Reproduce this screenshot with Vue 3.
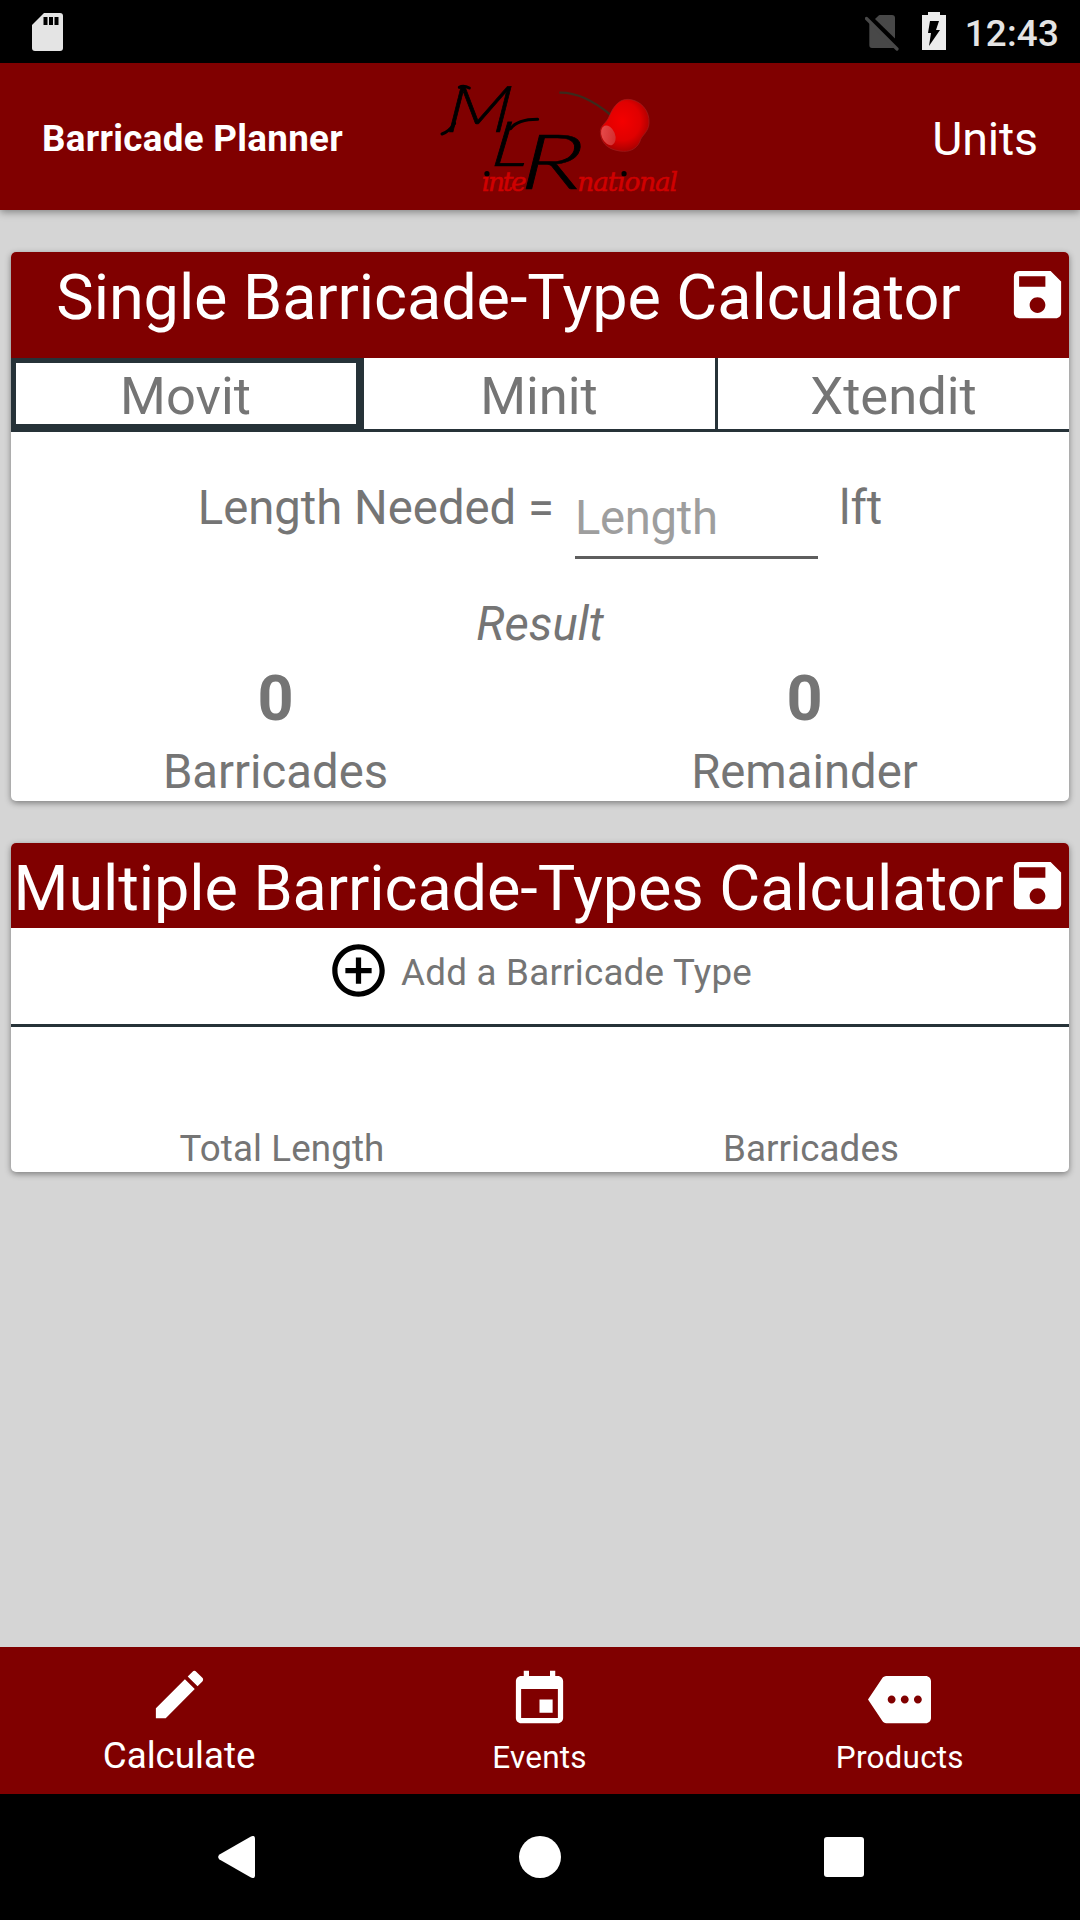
<script setup>
import { ref } from 'vue'

const tabs = ['Movit', 'Minit', 'Xtendit']
const selected = ref(0)
const length = ref('')

const savePath =
  'M17 3H5c-1.11 0-2 .9-2 2v14c0 1.1.89 2 2 2h14c1.1 0 2-.9 2-2V7l-4-4zm-5 16c-1.66 0-3-1.34-3-3s1.34-3 3-3 3 1.34 3 3-1.34 3-3 3zm3-10H5V5h10v4z'

const nav = [
  {
    label: 'Calculate',
    active: true,
    icon: 'M3 17.25V21h3.75L17.81 9.94l-3.75-3.75L3 17.25zM20.71 7.04c.39-.39.39-1.02 0-1.41l-2.34-2.34c-.39-.39-1.02-.39-1.41 0l-1.83 1.83 3.75 3.75 1.83-1.83z',
  },
  {
    label: 'Events',
    icon: 'M17 12h-5v5h5v-5zM16 1v2H8V1H6v2H5c-1.11 0-1.99.9-1.99 2L3 19c0 1.1.89 2 2 2h14c1.1 0 2-.9 2-2V5c0-1.1-.9-2-2-2h-1V1h-2zm3 18H5V8h14v11z',
  },
  {
    label: 'Products',
    icon: 'M22 3H7c-.69 0-1.23.35-1.59.88L0 12l5.41 8.11c.36.53.9.89 1.59.89h15c1.1 0 2-.9 2-2V5c0-1.1-.9-2-2-2zM9 13.5c-.83 0-1.5-.67-1.5-1.5s.67-1.5 1.5-1.5 1.5.67 1.5 1.5-.67 1.5-1.5 1.5zm5 0c-.83 0-1.5-.67-1.5-1.5s.67-1.5 1.5-1.5 1.5.67 1.5 1.5-.67 1.5-1.5 1.5zm5 0c-.83 0-1.5-.67-1.5-1.5s.67-1.5 1.5-1.5 1.5.67 1.5 1.5-.67 1.5-1.5 1.5z',
  },
]
</script>

<template>
  <div class="screen">
    <div class="status">
      <svg class="sd" width="31" height="38" viewBox="0 0 31 38">
        <path fill="#e4e4e4" d="M12 0H28Q31 0 31 3V35Q31 38 28 38H3Q0 38 0 35V12Z" />
        <path fill="#000" d="M11.5 4h4v8h-4zM17 4h4v8h-4zM22.500 4h4v8h-4z" />
      </svg>
      <div class="status-right">
        <svg class="sim" width="34" height="36" viewBox="0 0 34 36">
          <path fill="#484848" d="M10 4 14 .3Q14.500 0 15 0H27Q30 0 30 3V23.500Z" />
          <path fill="#484848" d="M4.300 7.500 29.500 32.500Q28.500 33 27.500 33H7Q4.300 33 4.300 30Z" />
          <path d="M1.500 3.500 32 34" stroke="#484848" stroke-width="3.200" stroke-linecap="round" />
        </svg>
        <svg class="battery" width="24" height="38" viewBox="0 0 24 38">
          <path fill="#ececec" d="M6 0h12v3h6v35H0V3h6z" />
          <path fill="#000" d="M8 9h9l-3 9h4L7 34l2-13H6z" />
        </svg>
        <span class="clock">12:43</span>
      </div>
    </div>

    <header class="appbar">
      <h1>Barricade Planner</h1>
      <svg class="logo" width="280" height="147" viewBox="0 9 840 441">
        <defs>
          <radialGradient id="cherry" cx="0.45" cy="0.42" r="0.62">
            <stop offset="0" stop-color="#f40000" />
            <stop offset="0.6" stop-color="#e00000" />
            <stop offset="1" stop-color="#a00000" />
          </radialGradient>
          <linearGradient id="shine" x1="0" y1="0" x2="1" y2="1">
            <stop offset="0" stop-color="#ea5050" />
            <stop offset="1" stop-color="#cf2828" />
          </linearGradient>
        </defs>
        <g class="word">
          <text x="185" y="392" textLength="135">inte</text>
          <text x="472" y="392" textLength="302">national</text>
        </g>
        <circle cx="201" cy="341" r="8" />
        <circle cx="612" cy="341" r="8" />
        <g class="mono">
          <text transform="translate(74 217) skewX(-6) scale(1.2 1)" font-size="194">M</text>
          <text transform="translate(210 317) skewX(-8) scale(1.26 1)" font-size="187">L</text>
          <text transform="translate(298 388) skewX(-4) scale(1.46 1)" font-size="229">R</text>
        </g>
        <g fill="none" stroke="#000" stroke-width="9" stroke-linecap="round">
          <path d="M66 222Q88 214 104 190" />
          <path d="M118 82Q130 74 148 84" />
          <path d="M272 206Q292 178 353 178" />
        </g>
        <path d="M418 98Q490 96 572 165" fill="none" stroke="#3c2a1c" stroke-width="7" />
        <path fill="url(#cherry)" stroke="#a02020" stroke-width="2" d="M568 168C582 135 600 117 625 118C660 120 690 150 687 190C685 215 668 225 662 238C655 262 635 275 610 274C575 272 542 258 541 215C541 195 560 190 568 168Z" />
        <ellipse cx="565" cy="226" rx="20" ry="31" fill="url(#shine)" transform="rotate(-22 565 226)" />
      </svg>
      <span class="units">Units</span>
    </header>

    <main>
      <section class="card">
        <div class="card-head tall">
          <h2>Single Barricade-Type Calculator</h2>
          <svg class="icon" viewBox="0 0 24 24"><path :d="savePath" /></svg>
        </div>
        <div class="tabs">
          <div
            v-for="(tab, i) in tabs"
            :key="tab"
            class="tab"
            :class="{ selected: i === selected }"
            @click="selected = i"
          >{{ tab }}</div>
        </div>
        <div class="length-row">
          <span>Length Needed =</span>
          <input v-model="length" placeholder="Length" />
          <span>lft</span>
        </div>
        <div class="result">Result</div>
        <div class="totals">
          <div><b>0</b><span>Barricades</span></div>
          <div><b>0</b><span>Remainder</span></div>
        </div>
      </section>

      <section class="card">
        <div class="card-head">
          <h2>Multiple Barricade-Types Calculator</h2>
          <svg class="icon" viewBox="0 0 24 24"><path :d="savePath" /></svg>
        </div>
        <div class="add">
          <svg class="icon dark" viewBox="0 0 24 24">
            <path d="M13 7h-2v4H7v2h4v4h2v-4h4v-2h-4V7zm-1-5C6.480 2 2 6.480 2 12s4.480 10 10 10 10-4.480 10-10S17.520 2 12 2zm0 18c-4.410 0-8-3.590-8-8s3.590-8 8-8 8 3.590 8 8-3.590 8-8 8z" />
          </svg>
          <span>Add a Barricade Type</span>
        </div>
        <div class="summary">
          <span class="total">Total Length</span>
          <span class="count">Barricades</span>
        </div>
      </section>
    </main>

    <nav class="bottom">
      <div v-for="item in nav" :key="item.label" class="nav-item" :class="{ active: item.active }">
        <svg class="icon" viewBox="0 0 24 24"><path :d="item.icon" /></svg>
        <span>{{ item.label }}</span>
      </div>
    </nav>

    <div class="system">
      <svg width="37" height="42" viewBox="0 0 37 42">
        <path fill="#fff" d="M32.500.8Q37-1.500 37 2.500V39.500Q37 43.500 32.500 41.200L1.500 23.500Q-1.200 21 1.500 18.500Z" />
      </svg>
      <div class="home"></div>
      <div class="recent"></div>
    </div>
  </div>
</template>

<style>
body {
  margin: 0;
}
</style>

<style scoped>
.screen {
  width: 1080px;
  height: 1920px;
  display: flex;
  flex-direction: column;
  overflow: hidden;
  background: #d5d5d5;
  color: #757575;
  font-family: Roboto, 'Liberation Sans', sans-serif;
}
h1,
h2 {
  margin: 0;
}
.icon {
  display: block;
  flex: none;
  width: 63px;
  height: 63px;
  fill: #fff;
}
.status {
  flex: none;
  display: flex;
  justify-content: space-between;
  height: 63px;
  background: #000;
}
.sd {
  margin: 12.5px 0 0 32px;
}
.status-right {
  display: flex;
  padding-right: 21px;
}
.sim {
  margin: 14.5px 23px 0 0;
}
.battery {
  margin: 12px 19px 0 0;
}
.clock {
  font-size: 36.75px;
  font-weight: 500;
  line-height: 67px;
  letter-spacing: 0.2px;
  color: #e4e4e4;
}
.appbar {
  flex: none;
  position: relative;
  display: flex;
  height: 147px;
  background: #800000;
  color: #fff;
  box-shadow: 0 2px 8px rgba(0, 0, 0, 0.4);
}
h1 {
  width: 379px;
  padding-left: 42px;
  box-sizing: border-box;
  font-size: 36.75px;
  font-weight: 700;
  line-height: 151px;
  letter-spacing: 0.3px;
  white-space: nowrap;
}
.logo {
  display: block;
  margin-left: 41px;
}
.word {
  fill: #d00000;
  stroke: #d00000;
  stroke-width: 1.500px;
  font: italic 79px 'DejaVu Serif', serif;
}
.mono {
  font-family: Lato, 'Liberation Serif', serif;
  font-style: italic;
  font-weight: 300;
  stroke: #000;
  stroke-width: 2px;
}
.units {
  margin-left: auto;
  padding-right: 42px;
  font-size: 46.5px;
  line-height: 152px;
  letter-spacing: -0.1px;
}
main {
  flex: 1;
  display: flex;
  flex-direction: column;
  gap: 42px;
  padding: 42px 11px 0;
}
.card {
  overflow: hidden;
  border-radius: 5px;
  background: #fff;
  box-shadow: 0 2px 6px rgba(0, 0, 0, 0.42);
}
.card-head {
  display: flex;
  height: 85px;
  background: #800000;
  color: #fff;
}
.card-head.tall {
  height: 106px;
}
.card-head h2 {
  flex: 1;
  margin-top: 8px;
  font-size: 63px;
  font-weight: 400;
  line-height: 75px;
  letter-spacing: -0.09px;
  text-align: center;
  white-space: nowrap;
}
.card-head .icon {
  margin-top: 11px;
}
.tabs {
  display: grid;
  grid-template-columns: 353px 354px 351px;
  grid-template-rows: 71px;
  height: 71px;
  border-bottom: 3px solid #263238;
}
.tab {
  box-sizing: border-box;
  padding: 5px 1px 0 0;
  border-right: 3px solid #263238;
  font-size: 52.5px;
  line-height: 66px;
  text-align: center;
}
.tab:last-child {
  padding-right: 0;
  border-right: 0;
}
.tab.selected {
  padding: 0 1px 0 0;
  border: 5px solid #263238;
  border-right-width: 8px;
}
.length-row {
  display: flex;
  justify-content: center;
  height: 155px;
  padding-top: 43px;
  box-sizing: border-box;
  font-size: 47.25px;
  line-height: 67px;
}
.length-row input {
  width: 243px;
  height: 84px;
  margin: 0 21px;
  padding: 16px 0 11px;
  box-sizing: border-box;
  border: 0;
  border-bottom: 3px solid #5e5e5e;
  outline: 0;
  background: none;
  font: inherit;
  letter-spacing: -0.3px;
  line-height: 54px;
  color: #212121;
}
.length-row input::placeholder {
  color: #9e9e9e;
  opacity: 1;
}
.result {
  height: 75px;
  font-size: 47.25px;
  font-style: italic;
  line-height: 74px;
  text-align: center;
}
.totals {
  display: flex;
  height: 139px;
}
.totals div {
  flex: 1;
  display: flex;
  flex-direction: column;
  text-align: center;
}
.totals b {
  font-size: 63px;
  line-height: 73px;
}
.totals span {
  font-size: 47.25px;
  line-height: 75px;
}
.add {
  display: flex;
  justify-content: center;
  height: 96px;
  padding-right: 1px;
  border-bottom: 3px solid #263238;
  font-size: 36.75px;
  line-height: 90px;
  letter-spacing: 0.23px;
}
.icon.dark {
  margin: 11px 11px 0 0;
  fill: #000;
}
.summary {
  display: flex;
  align-items: flex-end;
  height: 145px;
  font-size: 36.75px;
  line-height: 47px;
  letter-spacing: 0.1px;
  text-align: center;
}
.summary .total {
  width: 542px;
}
.summary .count {
  flex: 1;
}
.bottom {
  flex: none;
  display: flex;
  height: 147px;
  margin-left: -1px;
  background: #800000;
  color: #fff;
}
.nav-item {
  flex: 1;
  display: flex;
  flex-direction: column;
  align-items: center;
  padding-top: 21px;
  font-size: 31.5px;
  line-height: 54px;
  letter-spacing: 0.2px;
}
.nav-item.active {
  padding-top: 16px;
  font-size: 36.75px;
  line-height: 60px;
  letter-spacing: 0;
}
.system {
  flex: none;
  display: flex;
  height: 126px;
  padding: 42px 216px 0 217.5px;
  box-sizing: border-box;
  justify-content: space-between;
  background: #000;
}
.home {
  width: 42px;
  height: 42px;
  margin-left: 1px;
  border-radius: 50%;
  background: #fff;
}
.recent {
  width: 40px;
  height: 40px;
  margin-top: 1px;
  border-radius: 3px;
  background: #fff;
}
</style>
